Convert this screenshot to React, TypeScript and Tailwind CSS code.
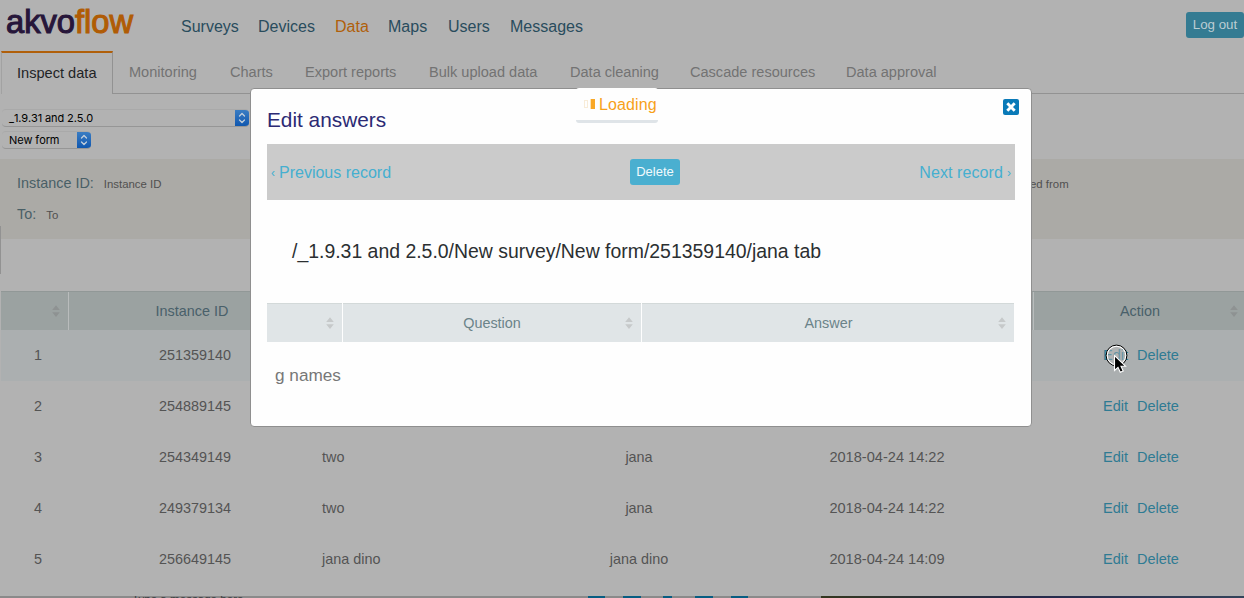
import React from 'react';

const cls = (...c: string[]) => c.join(' ');

function Sort({ dim = false }: { dim?: boolean }) {
  return (
    <svg width="8" height="12" viewBox="0 0 8 12" className={cls('shrink-0', dim ? 'fill-[#8e9292]' : 'fill-[#c6c9ca]')}>
      <path d="M4 0.2 L7.8 5 H0.2Z M0.2 7.2 H7.8 L4 12Z" />
    </svg>
  );
}

const nav = [
  { t: 'Surveys', w: 'w-[77px]' },
  { t: 'Devices', w: 'w-[77px]' },
  { t: 'Data', w: 'w-[53px]', on: true },
  { t: 'Maps', w: 'w-[60px]' },
  { t: 'Users', w: 'w-[62px]' },
  { t: 'Messages', w: 'w-[80px]' },
];

const tabs = [
  { t: 'Monitoring', w: 'w-[101px]' },
  { t: 'Charts', w: 'w-[75px]' },
  { t: 'Export reports', w: 'w-[124px]' },
  { t: 'Bulk upload data', w: 'w-[141px]' },
  { t: 'Data cleaning', w: 'w-[120px]' },
  { t: 'Cascade resources', w: 'w-[156px]' },
  { t: 'Data approval', w: 'w-[110px]' },
];

const rows = [
  { n: '1', id: '251359140', a: '', b: '', d: '' },
  { n: '2', id: '254889145', a: '', b: '', d: '' },
  { n: '3', id: '254349149', a: 'two', b: 'jana', d: '2018-04-24 14:22' },
  { n: '4', id: '249379134', a: 'two', b: 'jana', d: '2018-04-24 14:22' },
  { n: '5', id: '256649145', a: 'jana dino', b: 'jana dino', d: '2018-04-24 14:09' },
];

function MacSelect({ label, width, tracking }: { label: string; width: string; tracking: string }) {
  return (
    <div className={cls('flex h-[18px] items-center overflow-hidden rounded-[4px] border-y border-t-[#a9a9a9] border-b-[#969696] bg-[#b2b2b2] pl-[7px]', width)}>
      <span className={cls('grow whitespace-nowrap font-[Inter] text-[11px] leading-[16px] text-black [font-kerning:none]', tracking)}>{label}</span>
      <span className="flex h-[18px] w-[14px] shrink-0 items-center justify-center bg-gradient-to-b from-[#3c7fc4] to-[#0b55ae]">
        <svg width="8" height="12" viewBox="0 0 8 12" fill="none" stroke="#c4cfdb" strokeWidth="1.3" strokeLinecap="round" strokeLinejoin="round">
          <path d="M1.5 4 4 1.5 6.5 4M1.5 8 4 10.5 6.5 8" />
        </svg>
      </span>
    </div>
  );
}

function Modal() {
  return (
    <div className="absolute left-[250px] top-[88px] h-[339px] w-[782px] rounded-[4px] border border-[#8f8f8f] bg-[#fefefe]">
      <div className="flex h-[55px] items-start justify-between pl-4 pr-3">
        <h2 className="pt-[18px] text-[20.8px] leading-[26px] text-[#2c2a74]">Edit answers</h2>
        <button className="mt-[10px] flex h-4 w-4 items-center justify-center rounded-[2px] bg-[#0a7ab8]">
          <svg width="10" height="10" viewBox="0 0 10 10" fill="none" stroke="#fff" strokeWidth="2.9">
            <path d="M1.3 1.3 8.7 8.7M8.7 1.3 1.3 8.7" />
          </svg>
        </button>
      </div>
      <div className="ml-4 flex h-[56px] w-[748px] items-center bg-[#cbcbcb] px-[4px] text-[16px] text-[#45afd0]">
        <span className="flex w-[359px] items-center gap-[4px] pt-[2px]">
          <span className="text-[12px]">‹</span>Previous record
        </span>
        <button className="h-[26px] w-[50px] rounded-[3px] bg-[#4aafd0] text-[13px] leading-[26px] text-[#f2fafd]">Delete</button>
        <span className="flex grow items-center justify-end gap-[4px] whitespace-nowrap pt-[2px] tracking-[0.08px]">
          Next record<span className="text-[12px]">›</span>
        </span>
      </div>
      <div className="flex h-[103px] items-center pl-[41px] pt-px text-[19.43px] text-[#2b2f31]">
        /_1.9.31 and 2.5.0/New survey/New form/251359140/jana tab
      </div>
      <div className="ml-4 flex h-[39px] w-[747px] gap-px text-[14.4px] text-[#6b8389]">
        <div className="flex w-[75px] items-center justify-end border-t border-[#d3d9d9] bg-[#e0e5e7] pr-[8px]"><Sort /></div>
        <div className="flex w-[298px] items-center border-t border-[#d3d9d9] bg-[#e0e5e7] pr-[8px]">
          <span className="ml-[16px] grow pt-[2px] text-center">Question</span><Sort />
        </div>
        <div className="flex w-[372px] items-center border-t border-[#d3d9d9] bg-[#e0e5e7] pr-[8px]">
          <span className="ml-[17px] grow pt-[2px] text-center">Answer</span><Sort />
        </div>
      </div>
      <div className="pl-[24px] pt-[22px] text-[17.2px] leading-[22px] text-[#777]">g names</div>
    </div>
  );
}

export default function App() {
  return (
    <div className="relative flex h-[598px] w-[1244px] flex-col overflow-hidden bg-[#b2b2b2] font-['Liberation_Sans',Arial,sans-serif] text-[14.4px] text-[#545454]">
      <header className="flex h-[51px]">
        <div className="w-[181px] pl-[6px]">
          <span className="inline-block origin-left scale-x-[0.99] whitespace-nowrap text-[33px] leading-[43px] text-[#27163a] [-webkit-text-stroke:1.1px_currentColor]">
            akvo<span className="text-[#b05c05]">flow</span>
          </span>
        </div>
        <nav className="flex h-[54px] items-center text-[16px] text-[#294c5d]">
          {nav.map((n) => (
            <a key={n.t} className={cls(n.w, n.on ? 'text-[#b05f0a]' : '')}>{n.t}</a>
          ))}
        </nav>
        <button className="ml-auto mt-[12px] h-[26px] w-[58px] rounded-[3px] bg-[#347b92] text-[13.3px] text-[#bccdd3]">Log out</button>
      </header>

      <div className="flex h-[43px] shrink-0 text-[14.55px] text-[#737373]">
        <div className="ml-px w-[112px] border-l border-r border-t-2 border-l-[#a2a2a2] border-r-[#929292] border-t-[#b05f0a] pl-[15px] text-[14.6px] leading-[41px] text-[#1f2426]">Inspect data</div>
        <div className="flex grow border-b border-[#929292] pl-[16px] leading-[42px]">
          {tabs.map((t) => (
            <span key={t.t} className={cls('whitespace-nowrap', t.w)}>{t.t}</span>
          ))}
        </div>
      </div>

      <div className="flex h-[65px] shrink-0 flex-col gap-[4px] pl-[2px] pt-[15px]">
        <MacSelect label="_1.9.31 and 2.5.0" width="w-[247px]" tracking="tracking-[-0.12px]" />
        <MacSelect label="New form" width="w-[89px]" tracking="tracking-[-0.12px]" />
      </div>

      <section className="flex h-[80px] shrink-0 bg-[#abaaa6] pl-[17px] pt-[9px]">
        <div className="flex w-[1013px] flex-col">
          <div className="flex h-[31px] items-center gap-[10px]">
            <span className="text-[14.4px] text-[#495f66]">Instance ID:</span>
            <span className="pt-[2px] text-[11.4px] text-[#505050]">Instance ID</span>
          </div>
          <div className="flex h-[31px] items-center gap-[10px]">
            <span className="text-[14.4px] text-[#495f66]">To:</span>
            <span className="pt-[2px] text-[11.4px] text-[#505050]">To</span>
          </div>
        </div>
        <span className="pt-[9px] text-[11.4px] leading-[14px] text-[#505050]">ed from</span>
      </section>

      <div className="h-[52px] shrink-0" />

      <div className="ml-px flex h-[39px] shrink-0 border-t border-[#919897] bg-[#9ba2a1] text-[#49606a]">
        <div className="flex w-[68px] items-center justify-end border-r border-[#b9bcbc] pr-[8px]"><Sort dim /></div>
        <div className="flex w-[246px] items-center justify-center pt-[2px]">Instance ID</div>
        <div className="grow border-r border-[#b9bcbc]" />
        <div className="flex w-[210px] items-center pr-[6px]">
          <span className="ml-[16px] grow pt-[2px] text-center">Action</span><Sort dim />
        </div>
      </div>

      <div className="ml-px">
        {rows.map((r, i) => (
          <div key={r.n} className={cls('flex h-[51px] items-center', i === 0 ? 'bg-[#abafb0]' : '')}>
            <span className="w-[74px] text-center">{r.n}</span>
            <span className="w-[240px] text-center">{r.id}</span>
            <span className="w-[221px] pl-[7px]">{r.a}</span>
            <span className="w-[206px] text-center">{r.b}</span>
            <span className="w-[290px] text-center text-[14.6px]">{r.d}</span>
            <span className="flex grow gap-[9px] pl-[71px] text-[14.5px] text-[#2f7b93]"><a>Edit</a><a>Delete</a></span>
          </div>
        ))}
      </div>

      <div className="absolute left-0 top-[226px] h-[48px] w-px bg-[#929292]" />
      <div className="absolute bottom-0 left-0 flex h-[2px] w-full overflow-hidden bg-[#8a8a8a]">
        <span className="-mt-[4px] h-[14px] w-[588px] shrink-0 whitespace-nowrap pl-[132px] text-[11.6px] leading-[14px] text-[#3b3d40]">Type a message here</span>
        <span className="w-[17px] bg-[#075d82]" />
        <span className="ml-[18px] w-[18px] bg-[#075d82]" />
        <span className="ml-[22px] w-[9px] bg-[#075d82]" />
        <span className="ml-[23px] w-[18px] bg-[#075d82]" />
        <span className="ml-[18px] w-[17px] bg-[#075d82]" />
        <span className="ml-auto w-[423px] bg-gradient-to-r from-[#34371f] via-[#25294b] to-[#33435a]" />
      </div>

      <Modal />

      <div className="absolute left-[576px] top-[88px] flex h-[35px] w-[82px] items-start rounded-[3px] border-b-[3px] border-[#dfe4e8] bg-[#fefefe] pl-[8px] pt-[7px] text-[16px] leading-[20px] tracking-[0.1px] text-[#f7a11a]">
        <span className="mr-[2px] mt-[5px] h-[8px] w-[4px] border border-[#f8ecd8]" />
        <span className="mr-[4px] mt-[4px] h-[10px] w-[5px] border-l border-[#fde2b3] bg-[#f9a826]" />
        Loading
      </div>

      <svg className="absolute left-[1104px] top-[343px]" width="28" height="32" viewBox="0 0 28 32">
        <circle cx="12.5" cy="12.5" r="9.5" fill="#bbb" fillOpacity="0.4" stroke="#fff" strokeWidth="1.5" />
        <circle cx="12.5" cy="12.5" r="10.4" fill="none" stroke="#000" strokeWidth="1" />
        <path d="M10.5 12.5V27.5L14 24.3 16.3 29.2 19.2 27.9 17 23.2H21.5Z" fill="#000" stroke="#fff" strokeWidth="1.1" />
      </svg>
    </div>
  );
}
